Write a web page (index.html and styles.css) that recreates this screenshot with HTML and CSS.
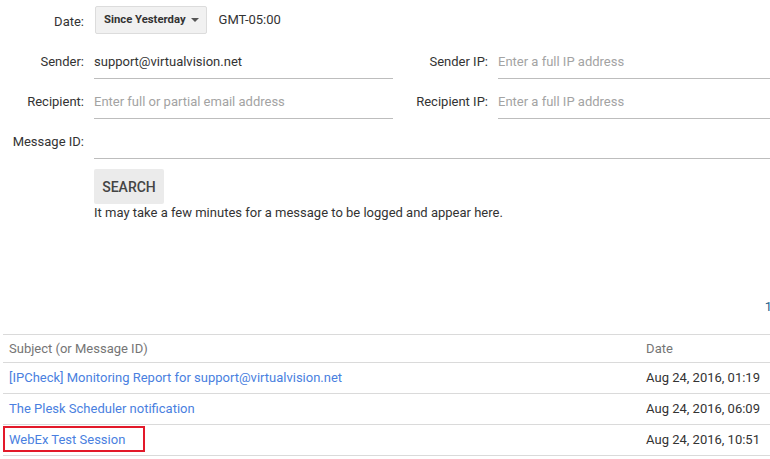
FILE: index.html
```html
<!DOCTYPE html>
<html>
<head>
  <meta charset="utf-8">
  <title>Message Log Search</title>
  <link rel="stylesheet" href="styles.css">
</head>
<body>
  <form class="search-form">
    <div class="fields">
      <label class="lbl">Date:</label>
      <div class="date-cell">
        <button type="button" class="date-btn">Since Yesterday <span class="caret"></span></button>
        <span class="tz">GMT-05:00</span>
      </div>

      <label class="lbl">Sender:</label>
      <input class="fld" value="support@virtualvision.net">
      <label class="lbl">Sender IP:</label>
      <input class="fld" placeholder="Enter a full IP address">

      <label class="lbl">Recipient:</label>
      <input class="fld" placeholder="Enter full or partial email address">
      <label class="lbl">Recipient IP:</label>
      <input class="fld" placeholder="Enter a full IP address">

      <label class="lbl">Message ID:</label>
      <input class="fld fld-wide">
    </div>

    <div class="actions">
      <button type="button" class="btn-search">SEARCH</button>
      <div class="hint">It may take a few minutes for a message to be logged and appear here.</div>
    </div>
  </form>

  <div class="pager"><span>1</span></div>

  <table class="results">
    <tr>
      <th class="col-subj">Subject (or Message ID)</th>
      <th class="col-date">Date</th>
    </tr>
    <tr>
      <td><a href="#">[IPCheck] Monitoring Report for support@virtualvision.net</a></td>
      <td>Aug 24, 2016, 01:19</td>
    </tr>
    <tr>
      <td><a href="#">The Plesk Scheduler notification</a></td>
      <td>Aug 24, 2016, 06:09</td>
    </tr>
    <tr>
      <td class="marked-cell"><a href="#">WebEx Test Session</a><span class="mark"></span></td>
      <td>Aug 24, 2016, 10:51</td>
    </tr>
  </table>
</body>
</html>
```

FILE: styles.css
```css
body {
  margin: 0;
  width: 770px;
  overflow: hidden;
  font: 400 13px Roboto, "Liberation Sans", Arial, sans-serif;
  color: #333;
  background: #fff;
}

.fields {
  display: grid;
  grid-template-columns: 84px 299px 85px 272px;
  grid-auto-rows: 40px;
  column-gap: 10px;
}

.lbl {
  text-align: right;
  align-self: end;
  height: 34px;
  line-height: 34px;
  margin-bottom: 1px;
  color: #333;
  white-space: nowrap;
}

.date-cell {
  grid-column: 2 / 5;
  display: flex;
  align-items: center;
  gap: 12px;
  margin-left: 1px;
  margin-top: -1px;
}

.date-btn {
  height: 28px;
  padding: 0 7px 0 8px;
  font: 700 11.3px Roboto, "Liberation Sans", Arial, sans-serif;
  color: #333;
  background: #f1f1f1;
  border: 1px solid #dcdcdc;
  border-radius: 2px;
  display: flex;
  align-items: center;
  gap: 5px;
}

.caret {
  width: 0;
  height: 0;
  border-left: 4px solid transparent;
  border-right: 4px solid transparent;
  border-top: 4px solid #555;
}

.tz {
  font-size: 13px;
  color: #333;
}

.fld {
  align-self: end;
  height: 34px;
  margin: 0 0 1px 0;
  padding: 0;
  border: 0;
  border-bottom: 1px solid #bdbdbd;
  font: 400 13px Roboto, "Liberation Sans", Arial, sans-serif;
  color: #333;
  outline: none;
  background: transparent;
}

.fld::placeholder {
  color: #a3a3a3;
}

.fld-wide {
  grid-column: 2 / 5;
}

.actions {
  padding: 9px 0 0 94px;
}

.btn-search {
  display: block;
  width: 70px;
  height: 35px;
  border: 0;
  border-radius: 2px;
  background: #ebebeb;
  font: 500 14px Roboto, "Liberation Sans", Arial, sans-serif;
  color: #444;
  padding: 0;
}

.hint {
  margin-top: 1px;
  line-height: 16px;
}

.pager {
  text-align: right;
  margin-top: 78px;
  height: 16px;
  line-height: 16px;
}

.pager span {
  color: #1f5f8b;
  margin-right: -2px;
}

.results {
  border-collapse: collapse;
  margin: 19px 0 0 3px;
  width: 771px;
}

.results th {
  text-align: left;
  font-weight: 400;
  color: #757575;
  height: 27px;
  padding: 0 6px;
  border-top: 1px solid #dadada;
  border-bottom: 1px solid #dadada;
}

.results td {
  height: 29px;
  padding: 0 6px 1px;
  border-bottom: 1px solid #dadada;
  color: #333;
  white-space: nowrap;
}

.results th:last-child,
.results td:last-child {
  padding-right: 14px;
}

.col-date {
  width: 112px;
}

.results a {
  color: #4a7fe0;
  text-decoration: none;
}

.marked-cell {
  position: relative;
}

.mark {
  position: absolute;
  left: 0;
  top: 1px;
  width: 142px;
  height: 26px;
  box-sizing: border-box;
  border: 2px solid #e3192a;
}
```
